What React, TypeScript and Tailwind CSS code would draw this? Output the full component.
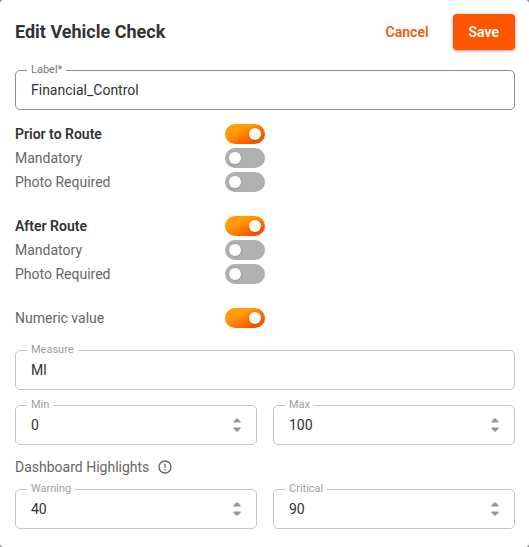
import { useId, useState } from "react";
import clsx from "clsx";

type FieldProps = {
  label: string;
  value: string;
  onChange: (value: string) => void;
  numeric?: boolean;
  required?: boolean;
};

function Arrow({ down }: { down?: boolean }) {
  return (
    <svg viewBox="0 0 8 5" className={clsx("w-2 h-[5px] fill-[#969696]", down && "rotate-180")} aria-hidden="true">
      <path d="M3.3.5a1 1 0 0 1 1.4 0L7.6 3.6Q8 4.5 7.1 4.5H.9Q0 4.5.4 3.6Z" />
    </svg>
  );
}

function Field({ label, value, onChange, numeric, required }: FieldProps) {
  const id = useId();

  const step = (amount: number) => onChange(String(Number(value) + amount));

  return (
    <fieldset
      className={clsx(
        "min-w-0 rounded-[5px] border px-[11px]",
        required ? "border-[#8e8e8e]" : "border-[#c4c4c4]"
      )}
    >
      <legend className={clsx("px-1 text-[11px] leading-[10px]", required ? "text-[#757575]" : "text-[#9e9e9e]")}>
        <label htmlFor={id}>{label}</label>
      </legend>
      <div className="flex h-[34px] items-center px-1 pb-1">
        <input
          id={id}
          type={numeric ? "number" : "text"}
          value={value}
          onChange={(e) => onChange(e.target.value)}
          required={required}
          className="h-5 min-w-0 flex-1 text-sm text-[#333333] outline-none [appearance:textfield] [&::-webkit-inner-spin-button]:appearance-none"
        />
        {numeric && (
          <div className="flex flex-col gap-1">
            <button type="button" aria-label={`Increase ${label}`} onClick={() => step(1)}>
              <Arrow />
            </button>
            <button type="button" aria-label={`Decrease ${label}`} onClick={() => step(-1)}>
              <Arrow down />
            </button>
          </div>
        )}
      </div>
    </fieldset>
  );
}

function ToggleRow({ label, on = false, heading }: { label: string; on?: boolean; heading?: boolean }) {
  const id = useId();
  const [checked, setChecked] = useState(on);

  return (
    <div className="flex h-6 items-center">
      <label htmlFor={id} className={clsx("w-[210px] text-sm", heading ? "font-semibold text-[#333333]" : "text-[#666666]")}>
        {label}
      </label>
      <input
        id={id}
        type="checkbox"
        role="switch"
        checked={checked}
        onChange={(e) => setChecked(e.target.checked)}
        className="flex h-5 w-10 appearance-none items-center rounded-full bg-[#b0b0b0] px-1 before:size-3 before:rounded-full before:bg-white before:shadow-sm checked:justify-end checked:bg-linear-155 checked:from-[#ff9f00] checked:from-30% checked:to-[#ff5000] checked:to-80%"
      />
    </div>
  );
}

export default function App() {
  const [form, setForm] = useState({
    label: "Financial_Control",
    measure: "Ml",
    min: "0",
    max: "100",
    warning: "40",
    critical: "90",
  });

  return (
    <div className="bg-[#8c8c8c] font-['Roboto',sans-serif]">
      <form
        onSubmit={(e) => e.preventDefault()}
        className="rounded-sm bg-white pt-3.5 pr-3.5 pb-[18px] pl-[15px]"
      >
        <div className="mb-[15px] flex items-center justify-between">
          <h1 className="text-lg font-bold text-[#333333]">Edit Vehicle Check</h1>
          <div className="flex items-center gap-2 text-sm font-semibold">
            <button type="button" className="h-9 px-4 text-[#f15a0e]">Cancel</button>
            <button type="submit" className="h-9 rounded-sm bg-[#ff5500] px-4 text-white shadow-[0_1px_3px_rgba(0,0,0,0.4)]">
              Save
            </button>
          </div>
        </div>

        <Field label="Label*" value={form.label} onChange={(label) => setForm({ ...form, label })} required />

        <div className="mt-3 mb-[15px] space-y-5">
          <div>
            <ToggleRow label="Prior to Route" heading on />
            <ToggleRow label="Mandatory" />
            <ToggleRow label="Photo Required" />
          </div>
          <div>
            <ToggleRow label="After Route" heading on />
            <ToggleRow label="Mandatory" />
            <ToggleRow label="Photo Required" />
          </div>
          <ToggleRow label="Numeric value" on />
        </div>

        <Field label="Measure" value={form.measure} onChange={(measure) => setForm({ ...form, measure })} />

        <div className="mt-2.5 grid grid-cols-2 gap-4">
          <Field label="Min" value={form.min} onChange={(min) => setForm({ ...form, min })} numeric />
          <Field label="Max" value={form.max} onChange={(max) => setForm({ ...form, max })} numeric />
        </div>

        <div className="mt-2.5 mb-[5px] flex h-6 items-center gap-2 text-[#666666]">
          <h2 className="text-sm">Dashboard Highlights</h2>
          <svg viewBox="0 0 24 24" className="size-4 fill-current" aria-hidden="true">
            <path d="M11 15h2v2h-2zm0-8h2v6h-2zm1-5a10 10 0 1 0 0 20 10 10 0 0 0 0-20zm0 18a8 8 0 1 1 0-16 8 8 0 0 1 0 16z" />
          </svg>
        </div>

        <div className="grid grid-cols-2 gap-4">
          <Field label="Warning" value={form.warning} onChange={(warning) => setForm({ ...form, warning })} numeric />
          <Field label="Critical" value={form.critical} onChange={(critical) => setForm({ ...form, critical })} numeric />
        </div>
      </form>
    </div>
  );
}
